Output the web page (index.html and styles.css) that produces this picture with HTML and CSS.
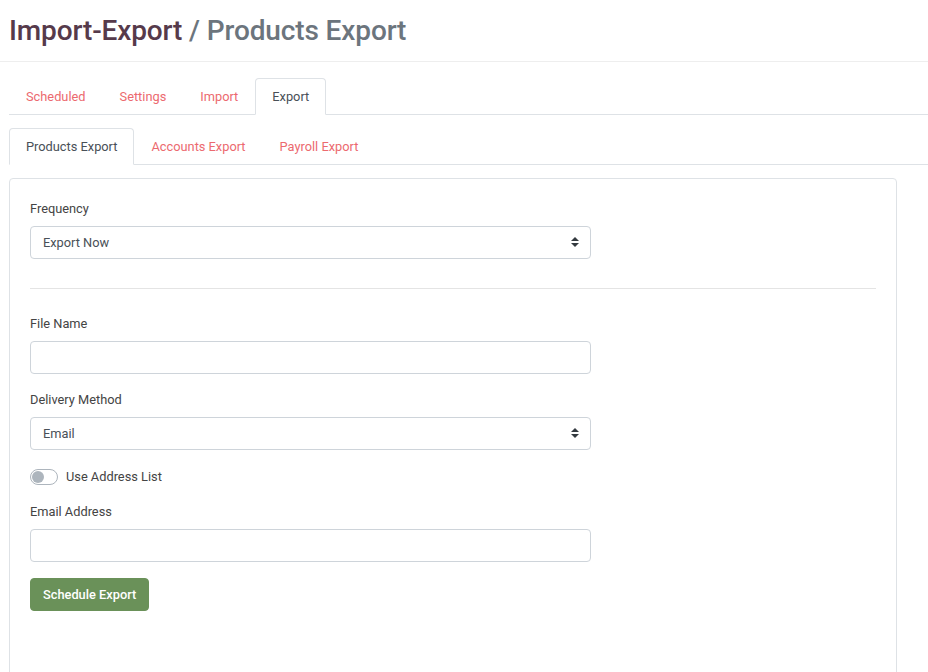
FILE: index.html
```html
<!DOCTYPE html>
<html lang="en">
<head>
  <meta charset="UTF-8" />
  <meta name="viewport" content="width=device-width, initial-scale=1.0"/>
  <title>Products Export - Import-Export</title>
  <link rel="stylesheet" href="styles.css">
</head>
<body>
  <div class="page-header">
    <h1><span class="crumb">Import-Export</span> <span class="current">/ Products Export</span></h1>
  </div>

  <div class="page-body">
    <ul class="tabs">
      <li><a href="#">Scheduled</a></li>
      <li><a href="#">Settings</a></li>
      <li><a href="#">Import</a></li>
      <li><a href="#" class="active">Export</a></li>
    </ul>

    <ul class="tabs">
      <li><a href="#" class="active">Products Export</a></li>
      <li><a href="#">Accounts Export</a></li>
      <li><a href="#">Payroll Export</a></li>
    </ul>

    <div class="card">
      <form id="exportForm">
        <div class="form-group">
          <label for="frequency">Frequency</label>
          <div class="select-wrap">
            <select id="frequency" name="frequency">
              <option>Export Now</option>
              <option>Daily</option>
              <option>Weekly</option>
              <option>Monthly</option>
            </select>
          </div>
        </div>

        <hr class="divider">

        <div class="form-group">
          <label for="file-name">File Name</label>
          <input type="text" id="file-name" name="file-name">
        </div>

        <div class="form-group">
          <label for="delivery">Delivery Method</label>
          <div class="select-wrap">
            <select id="delivery" name="delivery">
              <option>Email</option>
              <option>FTP</option>
              <option>Download</option>
            </select>
          </div>
        </div>

        <label class="switch">
          <input type="checkbox" id="use-list">
          <span class="switch-track"></span>
          Use Address List
        </label>

        <div class="form-group">
          <label for="email">Email Address</label>
          <input type="email" id="email" name="email">
        </div>

        <button type="submit" class="btn-schedule">Schedule Export</button>
      </form>
    </div>
  </div>
</body>
</html>
```

FILE: styles.css
```css
* {
  box-sizing: border-box;
}

body {
  margin: 0;
  font-family: Roboto, "Liberation Sans", Arial, sans-serif;
  font-size: 12.8px;
  color: #444;
  background: #fff;
}

.page-header {
  height: 62px;
  padding: 0 9px;
  border-bottom: 1px solid #eeeeee;
}

.page-header h1 {
  margin: 0;
  padding-top: 13px;
  font-size: 28px;
  font-weight: 500;
  line-height: 36px;
  letter-spacing: -0.12px;
}

.page-header .crumb {
  color: #563a4b;
}

.page-header .current {
  color: #6c757d;
}

.page-body {
  padding: 16px 0 0 9px;
}

.tabs {
  display: flex;
  list-style: none;
  margin: 0 0 13px;
  padding: 0;
  border-bottom: 1px solid #dee2e6;
}

.tabs a {
  display: block;
  padding: 8px 16px;
  margin-bottom: -1px;
  line-height: 19px;
  color: #ec6a6f;
  text-decoration: none;
  border: 1px solid transparent;
  border-top-left-radius: 4px;
  border-top-right-radius: 4px;
}

.tabs a.active {
  color: #495057;
  background: #fff;
  border-color: #dee2e6 #dee2e6 #fff;
}

.card {
  margin-right: 31px;
  min-height: 520px;
  padding: 20px;
  border: 1px solid #dee2e6;
  border-radius: 4px;
}

.form-group {
  margin-bottom: 16px;
}

.form-group label {
  display: block;
  margin-bottom: 7px;
  line-height: 20px;
  color: #444;
}

.form-group input,
.form-group select {
  display: block;
  width: 561px;
  height: 33px;
  padding: 0 12px;
  font: inherit;
  color: #495057;
  background: #fff;
  border: 1px solid #ced4da;
  border-radius: 4px;
  outline: none;
}

.form-group select {
  appearance: none;
  -webkit-appearance: none;
  padding-right: 30px;
}

.select-wrap {
  position: relative;
  width: 561px;
}

/* up/down caret on the right side of the select */
.select-wrap::before,
.select-wrap::after {
  content: "";
  position: absolute;
  right: 12px;
  border-left: 4px solid transparent;
  border-right: 4px solid transparent;
  pointer-events: none;
}

.select-wrap::before {
  top: 11px;
  border-bottom: 4px solid #343a40;
}

.select-wrap::after {
  top: 17px;
  border-top: 4px solid #343a40;
}

.divider {
  margin: 29px 0 25px;
  border: 0;
  border-top: 1px solid #e4e4e4;
}

.switch {
  display: flex;
  align-items: center;
  gap: 8px;
  margin: 17px 0 15px;
  line-height: 20px;
  cursor: pointer;
}

.switch input {
  display: none;
}

.switch-track {
  position: relative;
  width: 28px;
  height: 16px;
  border: 1px solid #adb5bd;
  border-radius: 8px;
  background: #fff;
}

.switch-track::after {
  content: "";
  position: absolute;
  top: 1px;
  left: 1px;
  width: 12px;
  height: 12px;
  border-radius: 50%;
  background: #adb5bd;
}

.switch input:checked + .switch-track {
  background: #6a9159;
  border-color: #6a9159;
}

.switch input:checked + .switch-track::after {
  left: 13px;
  background: #fff;
}

.btn-schedule {
  height: 33px;
  padding: 0 12px;
  font: inherit;
  font-weight: 500;
  color: #fff;
  background: #6a9159;
  border: 1px solid #6a9159;
  border-radius: 4px;
  cursor: pointer;
}

.btn-schedule:hover {
  background: #5c804c;
}
```
